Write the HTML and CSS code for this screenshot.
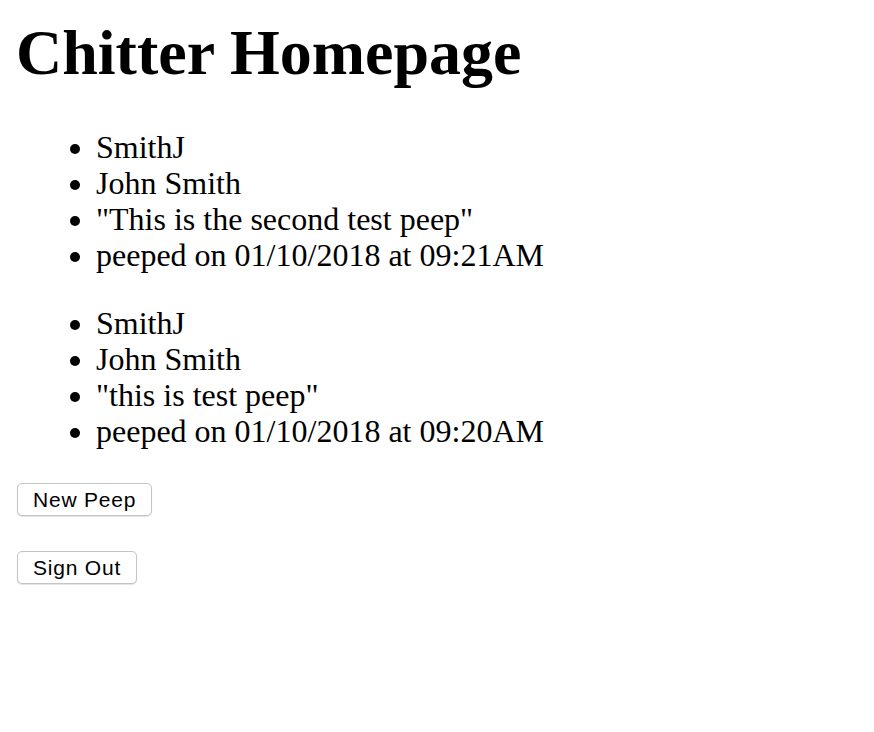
FILE: index.html
```html
<!DOCTYPE html>
<html>
<head>
<meta charset="utf-8">
<title>Chitter</title>
<link rel="stylesheet" href="styles.css">
</head>
<body>
<h1 class="title">Chitter Homepage</h1>
<ul class="peep">
  <li>SmithJ</li>
  <li>John Smith</li>
  <li>"This is the second test peep"</li>
  <li>peeped on 01/10/2018 at 09:21AM</li>
</ul>
<ul class="peep">
  <li>SmithJ</li>
  <li>John Smith</li>
  <li>"this is test peep"</li>
  <li>peeped on 01/10/2018 at 09:20AM</li>
</ul>
<form class="action"><button type="button" class="btn">New Peep</button></form>
<form class="action"><button type="button" class="btn">Sign Out</button></form>
</body>
</html>
```
FILE: styles.css
```css
html, body { background: #fff; }
body {
  margin: 0;
  padding: 16px;
  font-family: "Liberation Serif", "Times New Roman", serif;
  color: #000;
}
.title {
  font-size: 64px;
  font-weight: bold;
  line-height: 74px;
  margin: 0 0 39px;
}
.peep {
  font-size: 32px;
  line-height: 36px;
  margin: 0 0 32px;
  padding-left: 80px;
}
.peep:last-of-type { margin-bottom: 34px; }
.action { margin: 0 0 35px; }
.btn {
  font-family: "Liberation Sans", Arial, sans-serif;
  font-size: 21px;
  letter-spacing: 0.8px;
  height: 33px;
  margin-left: 1px;
  padding: 0 15px 0 15px;
  background: #fff;
  color: #000;
  border: 1px solid #c4c4c4;
  border-radius: 5px;
  box-shadow: 0 1px 1px rgba(0,0,0,0.12);
}
```
